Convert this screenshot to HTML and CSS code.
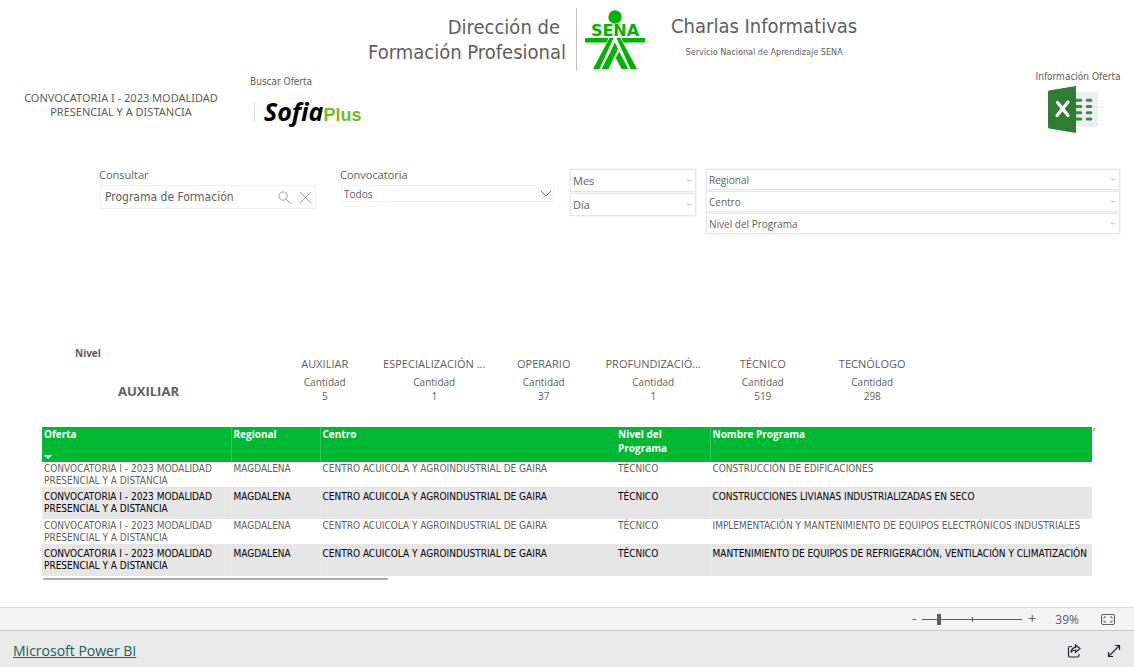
FILE: index.html
```html
<!DOCTYPE html>
<html lang="es">
<head>
<meta charset="utf-8">
<meta name="viewport" content="width=device-width, initial-scale=1">
<title>Oferta de formación SENA</title>
<link rel="stylesheet" href="styles.css">
</head>
<body>
<main class="report">
  <header class="header">
    <p class="call">CONVOCATORIA I - 2023 MODALIDAD PRESENCIAL Y A DISTANCIA</p>
    <div class="search-offer">
      <span class="caption">Buscar Oferta</span>
      <a class="sofia" href="#"><span class="sofia-name">Sofia</span><span class="sofia-plus">Plus</span></a>
    </div>
    <div class="brand">
      <h1 class="brand-title">
        <span class="brand-line brand-line-short">Dirección de</span>
        <span class="brand-line">Formación Profesional</span>
      </h1>
      <svg class="sena" viewBox="0 0 60 60" role="img" aria-label="SENA">
        <circle cx="30" cy="7" r="6.7"/>
        <text x="30" y="26" text-anchor="middle" class="sena-word">SENA</text>
        <path d="M0 28h23.500l-1.800 4.500H0zM36.500 28H60v4.500H38.300zM24.500 28h4L14.500 59H8zM31.500 28h4L52 59h-6.500zM30 32.500l3 6.500-9.500 20h-6.800zM34.200 41.500L43.300 59h-6.600L30.700 48z"/>
      </svg>
      <div class="talks">
        <h2 class="talks-title">Charlas Informativas</h2>
        <p class="talks-sub">Servicio Nacional de Aprendizaje SENA</p>
      </div>
    </div>
    <div class="excel">
      <span class="caption">Información Oferta</span>
      <a href="#" aria-label="Descargar en Excel">
        <svg class="excel-icon" viewBox="0 0 50 47">
          <rect x="26" y="6" width="24" height="35" rx="1.500" fill="#eceff1"/>
          <path d="M28 14.300h4.800M28 20.500h4.800M28 26.700h4.800M28 32.900h4.800M39.300 14.300h3.500M39.300 20.500h3.500M39.300 26.700h3.500M39.300 32.900h3.500" stroke="#388e3c" stroke-width="3" stroke-linecap="round"/>
          <path d="M28 0L1 4.500Q0 4.700 0 6v35q0 1.300 1 1.500L28 47z" fill="#2e7d32"/>
          <path d="M9.500 16.500L20 29.500M20 16L9 29.500" stroke="#fff" stroke-width="3.200" stroke-linecap="round"/>
        </svg>
      </a>
    </div>
  </header>

  <section class="filters">
    <div class="field field-search">
      <label class="label" for="q">Consultar</label>
      <div class="searchbox">
        <input class="search-input" id="q" type="text" value="Programa de Formación">
        <button class="icon-btn" type="button" aria-label="Buscar"><svg class="icon" viewBox="0 0 14 14"><circle cx="5.500" cy="5.500" r="4.500"/><path d="M9 9l4.500 4.500"/></svg></button>
        <button class="icon-btn" type="button" aria-label="Borrar"><svg class="icon" viewBox="0 0 14 14"><path d="M1 1l12 12M13 1L1 13"/></svg></button>
      </div>
    </div>
    <div class="field field-call">
      <label class="label" for="conv">Convocatoria</label>
      <div class="pick pick-light">
        <select class="select" id="conv"><option>Todos</option></select>
        <svg class="chev chev-big" viewBox="0 0 12 7"><path d="M1 1l5 5 5-5"/></svg>
      </div>
    </div>
    <div class="stack stack-date">
      <div class="pick"><select class="select" aria-label="Mes"><option>Mes</option></select><svg class="chev" viewBox="0 0 4 3"><path d="M0 1l2 1 2-1"/></svg></div>
      <div class="pick"><select class="select" aria-label="Día"><option>Día</option></select><svg class="chev" viewBox="0 0 4 3"><path d="M0 1l2 1 2-1"/></svg></div>
    </div>
    <div class="stack stack-place">
      <div class="pick"><select class="select" aria-label="Regional"><option>Regional</option></select><svg class="chev" viewBox="0 0 4 3"><path d="M0 1l2 1 2-1"/></svg></div>
      <div class="pick"><select class="select" aria-label="Centro"><option>Centro</option></select><svg class="chev" viewBox="0 0 4 3"><path d="M0 1l2 1 2-1"/></svg></div>
      <div class="pick"><select class="select" aria-label="Nivel del Programa"><option>Nivel del Programa</option></select><svg class="chev" viewBox="0 0 4 3"><path d="M0 1l2 1 2-1"/></svg></div>
    </div>
  </section>

  <section class="levels">
    <div class="level-now">
      <h3 class="level-label">Nivel</h3>
      <p class="level-value">AUXILIAR</p>
    </div>
    <dl class="cards">
      <div class="card"><dt class="card-name">AUXILIAR</dt><dd class="card-data">Cantidad<br>5</dd></div>
      <div class="card"><dt class="card-name">ESPECIALIZACIÓN ...</dt><dd class="card-data">Cantidad<br>1</dd></div>
      <div class="card"><dt class="card-name">OPERARIO</dt><dd class="card-data">Cantidad<br>37</dd></div>
      <div class="card"><dt class="card-name">PROFUNDIZACIÓ...</dt><dd class="card-data">Cantidad<br>1</dd></div>
      <div class="card"><dt class="card-name">TÉCNICO</dt><dd class="card-data">Cantidad<br>519</dd></div>
      <div class="card"><dt class="card-name">TECNÓLOGO</dt><dd class="card-data">Cantidad<br>298</dd></div>
    </dl>
  </section>

  <section class="grid-wrap">
    <div class="grid-scroll">
      <table class="grid">
        <colgroup><col class="c-offer"><col class="c-region"><col class="c-center"><col class="c-level"><col></colgroup>
        <thead>
          <tr><th>Oferta<svg class="sort" viewBox="0 0 8 4"><path d="M0 0h8L4 4z"/></svg></th><th>Regional</th><th>Centro</th><th>Nivel del<br>Programa</th><th>Nombre Programa</th></tr>
        </thead>
        <tbody>
          <tr><td>CONVOCATORIA I - 2023 MODALIDAD<br>PRESENCIAL Y A DISTANCIA</td><td>MAGDALENA</td><td>CENTRO ACUICOLA Y AGROINDUSTRIAL DE GAIRA</td><td>TÉCNICO</td><td>CONSTRUCCIÓN DE EDIFICACIONES</td></tr>
          <tr><td>CONVOCATORIA I - 2023 MODALIDAD<br>PRESENCIAL Y A DISTANCIA</td><td>MAGDALENA</td><td>CENTRO ACUICOLA Y AGROINDUSTRIAL DE GAIRA</td><td>TÉCNICO</td><td>CONSTRUCCIONES LIVIANAS INDUSTRIALIZADAS EN SECO</td></tr>
          <tr><td>CONVOCATORIA I - 2023 MODALIDAD<br>PRESENCIAL Y A DISTANCIA</td><td>MAGDALENA</td><td>CENTRO ACUICOLA Y AGROINDUSTRIAL DE GAIRA</td><td>TÉCNICO</td><td>IMPLEMENTACIÓN Y MANTENIMIENTO DE EQUIPOS ELECTRÓNICOS INDUSTRIALES</td></tr>
          <tr><td>CONVOCATORIA I - 2023 MODALIDAD<br>PRESENCIAL Y A DISTANCIA</td><td>MAGDALENA</td><td>CENTRO ACUICOLA Y AGROINDUSTRIAL DE GAIRA</td><td>TÉCNICO</td><td>MANTENIMIENTO DE EQUIPOS DE REFRIGERACIÓN, VENTILACIÓN Y CLIMATIZACIÓN</td></tr>
        </tbody>
      </table>
    </div>
    <div class="vbar"></div>
    <div class="hbar"></div>
  </section>
</main>

<div class="zoombar">
  <button class="zoom-btn" type="button">-</button>
  <input class="zoom-range" type="range" min="0" max="100" value="15" aria-label="Zoom">
  <button class="zoom-btn" type="button">+</button>
  <span class="zoom-value">39%</span>
  <button class="icon-btn" type="button" aria-label="Ajustar a la página"><svg class="fit" viewBox="0 0 14 11"><rect x=".5" y=".5" width="13" height="10" rx="1.500"/><path d="M5 3H3v1.500M9 3h2v1.500M5 8H3V6.500M9 8h2V6.500"/></svg></button>
</div>
<footer class="footer">
  <a class="pbi" href="#">Microsoft Power BI</a>
  <button class="icon-btn" type="button" aria-label="Compartir"><svg class="foot-icon" viewBox="0 0 14 14"><path d="M5 2.500H3a1.500 1.500 0 0 0-1.500 1.500v7.500A1.500 1.500 0 0 0 3 13h7.500a1.500 1.500 0 0 0 1.500-1.500V10"/><path d="M8.500 1l4.500 3.500-4.500 3.700V6Q5.500 6 4 8.500 4.300 3.800 8.500 3.300z"/></svg></button>
  <button class="icon-btn" type="button" aria-label="Pantalla completa"><svg class="foot-icon" viewBox="0 0 14 14"><path d="M1.500 12.500l11-11M8 1.500h4.500V6M1.500 8v4.500H6"/></svg></button>
</footer>
</body>
</html>
```

FILE: styles.css
```css
* { box-sizing: border-box; }
body {
  margin: 0;
  min-height: 100vh;
  display: flex;
  flex-direction: column;
  background: #fff;
  color: #605e5c;
  font-family: "Open Sans", "Noto Sans", sans-serif;
  font-size: 10px;
}
h1, h2, h3, p, dl, dd { margin: 0; font-weight: 400; }
button, input, select { font: inherit; color: inherit; }
a { color: inherit; }

.report { flex: 1; }

.header {
  display: grid;
  grid-template-columns: 242px 118px 1fr 106px;
  padding-bottom: 27px;
  font-family: "DejaVu Sans Condensed", "DejaVu Sans", sans-serif;
}
.call {
  padding: 91px 20px 0;
  font-family: "Noto Sans", sans-serif;
  font-size: 11px;
  line-height: 14px;
  text-align: center;
}
.caption { font: 10px/14px "DejaVu Sans Condensed", "DejaVu Sans", sans-serif; white-space: nowrap; }
.search-offer { padding: 75px 0 0 8px; }
.sofia {
  display: flex;
  align-items: baseline;
  width: max-content;
  margin: 6px 0 0 4px;
  padding-left: 10px;
  line-height: 32px;
  text-decoration: none;
  background: linear-gradient(#ddd, #ddd) 0 7px / 1px 20px no-repeat;
}
.sofia-name { color: #000; font: italic 700 25px/32px "Open Sans", sans-serif; }
.sofia-plus { color: #76b82a; font: 700 18px/32px "Liberation Sans", sans-serif; }

.brand { display: flex; align-items: flex-start; padding-top: 8px; }
.brand-title {
  width: 217px;
  padding: 7px 10px 6px 0;
  border-right: 1px solid #c0c0c0;
  font-size: 20px;
  line-height: 25px;
  text-align: right;
  white-space: nowrap;
}
.brand-line { display: block; }
.brand-line-short { padding-right: 6px; }
.sena { width: 60px; height: 60px; margin: 2px 26px 0 8px; fill: #00b300; }
.sena-word { font: 700 16px "DejaVu Sans", sans-serif; }
.talks { text-align: center; padding-top: 5px; white-space: nowrap; }
.talks-title { font-size: 20px; line-height: 26px; }
.talks-sub { margin-top: 6px; font-size: 9px; line-height: 14px; }
.excel { padding: 70px 6px 0 0; display: flex; flex-direction: column; align-items: center; }
.excel-icon { display: block; width: 50px; height: 47px; margin: 2px 0 0 -10px; }

.filters {
  display: flex;
  align-items: flex-start;
  padding: 8px 14px 108px 99px;
}
.label { display: block; font-size: 11px; line-height: 14px; }
.field-search { width: 217px; margin-right: 24px; }
.searchbox {
  display: flex;
  align-items: center;
  gap: 8px;
  height: 24px;
  margin: 3px 0 0 1px;
  padding: 0 3px 0 4px;
  border: 1px solid #f0f0f0;
}
.search-input { flex: 1; min-width: 0; padding: 0; border: 0; outline: 0; background: none; font-family: "DejaVu Sans Condensed", sans-serif; font-size: 12px; }
.icon-btn { display: flex; padding: 0; border: 0; background: none; }
.icon { width: 13px; height: 13px; fill: none; stroke: #999; }
.field-call { width: 214px; margin-right: 16px; }
.pick {
  display: flex;
  align-items: center;
  height: 23px;
  padding-right: 4px;
  border: 1px solid #e6e6e6;
  box-shadow: 0 0 0 1px #f7f7f7;
}
.pick-light { height: 17px; margin: 3px 0 0 1px; padding-right: 1px; border-color: #f4f4f4; box-shadow: none; }
.select { flex: 1; min-width: 0; height: 100%; padding: 0 2px; border: 0; background: none; appearance: none; }
.chev { width: 4px; height: 3px; fill: none; stroke: #bbb; }
.chev-big { width: 12px; height: 7px; stroke: #777; }
.stack { display: grid; gap: 1px; padding-top: 1px; }
.stack-date { width: 126px; margin-right: 10px; font-size: 11px; }
.stack-place { flex: 1; font-size: 10px; }
.stack-place .pick { height: 21px; }

.levels { display: flex; padding-bottom: 24px; }
.level-now { width: 270px; }
.level-label { margin-left: 75px; padding-top: 4px; font-size: 10px; font-weight: 700; line-height: 14px; }
.level-value { margin: 21px 0 0 118px; font-size: 13px; font-weight: 700; line-height: 20px; }
.cards { display: grid; grid-template-columns: repeat(6, 1fr); width: 657px; text-align: center; padding-top: 14px; }
.card-name { font-size: 11px; line-height: 16px; white-space: nowrap; }
.card-data { margin-top: 3px; font-size: 10px; line-height: 14px; }

.grid-wrap {
  display: grid;
  grid-template-columns: 1fr 3px;
  margin: 0 39px 0 42px;
}
.grid-scroll { overflow: hidden; }
.grid {
  width: 100%;
  table-layout: fixed;
  border-collapse: collapse;
  font: 10px/12px "DejaVu Sans Condensed", "DejaVu Sans", sans-serif;
}
.c-offer { width: 189px; }
.c-region { width: 89px; }
.c-center { width: 296px; }
.c-level { width: 94px; }
.grid th {
  height: 35px;
  padding: 0 2px;
  vertical-align: top;
  text-align: left;
  background: #00b932;
  color: #fff;
  font: 700 10px/14px "Open Sans", sans-serif;
}
.grid th + th, .grid td + td { border-left: 1px solid #ffffff33; }
.grid th:nth-child(4), .grid td:nth-child(4) { border-left: 0; }
.sort { display: block; width: 8px; height: 4px; margin-top: 14px; fill: #fff; }
.grid td { padding: 1px 2px 0; vertical-align: top; white-space: nowrap; }
.grid tbody tr:nth-child(even) { background: #e6e6e6; color: #000; }
.grid tbody tr:nth-child(even) td { padding: 4px 2px; }
.vbar { width: 2px; height: 3px; margin: 1px 0 0 1px; background: #bbb; }
.hbar { width: 345px; height: 2px; margin: 2px 0 0 1px; border-radius: 1px; background: #adadad; }

.zoombar {
  display: flex;
  align-items: center;
  justify-content: flex-end;
  height: 24px;
  padding-right: 19px;
  border-top: 1px solid #dcdcdc;
  border-bottom: 1px solid #c8c8c8;
  background: #f4f4f4;
}
.zoom-btn { width: 8px; padding: 0; border: 0; background: none; font-size: 14px; line-height: 16px; text-align: center; }
.zoom-range {
  width: 100px;
  height: 12px;
  margin: 0 6px 0 4px;
  appearance: none;
  background:
    linear-gradient(#605e5c, #605e5c) 50% 50% / 1px 5px no-repeat,
    linear-gradient(#605e5c, #605e5c) 0 50% / 100% 1px no-repeat;
}
.zoom-range::-webkit-slider-thumb { appearance: none; width: 4px; height: 11px; background: #605e5c; }
.zoom-value { margin: 0 22px 0 19px; font-size: 12px; }
.fit { width: 14px; height: 11px; fill: none; stroke: #605e5c; }
.footer {
  display: flex;
  align-items: center;
  height: 36px;
  padding: 3px 13px 0;
  background: #eaeaea;
}
.pbi { margin-right: auto; color: #0f6559; font-size: 14px; line-height: 20px; }
.footer .icon-btn + .icon-btn { margin-left: 26px; }
.foot-icon { width: 14px; height: 14px; fill: none; stroke: #201f2e; stroke-width: 1.2; }
```
